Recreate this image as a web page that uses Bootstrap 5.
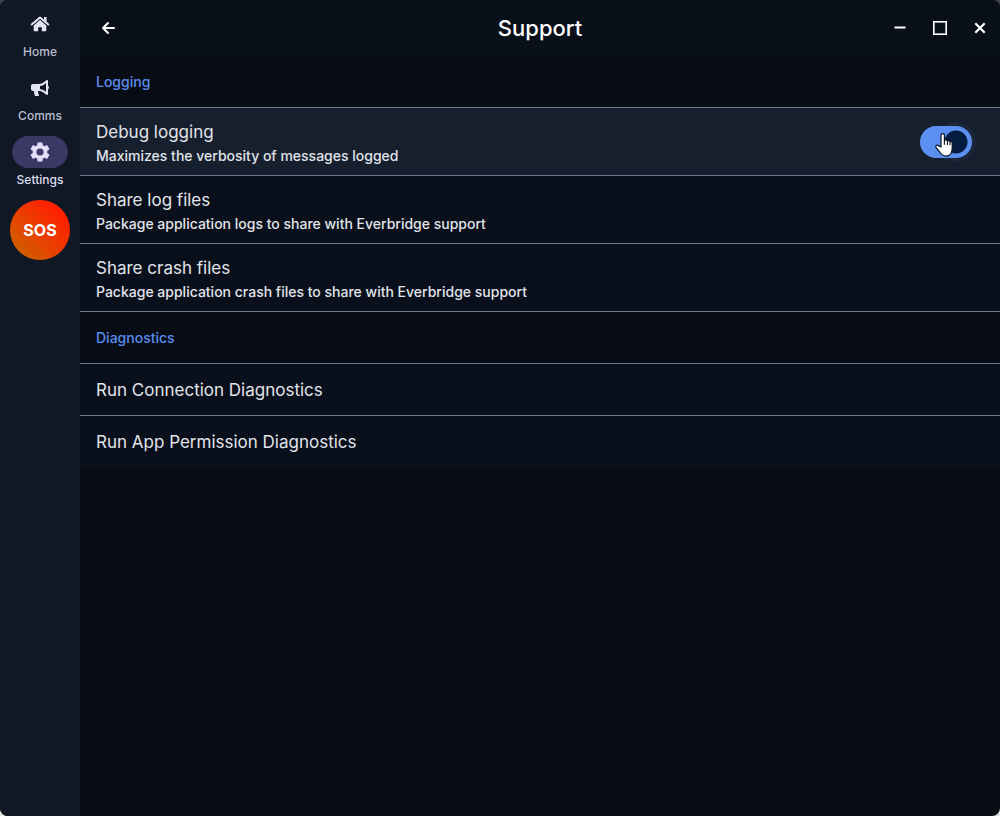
<!DOCTYPE html>
<html lang="en" data-bs-theme="dark">
<head>
<meta charset="utf-8">
<meta name="viewport" content="width=device-width, initial-scale=1">
<title>Support</title>
<link href="https://cdn.jsdelivr.net/npm/bootstrap@5.3.0/dist/css/bootstrap.min.css" rel="stylesheet">
<style>
  html { background: linear-gradient(#3c414b 50%, #e6e6e6 50%); }
  body { font-family: Inter, "Liberation Sans", sans-serif; background: transparent; color: #e1e4ea; }
  .app-window { background: #080c14; border-radius: 8px; }
  .rail { width: 80px; background: #101725; }
  .rail-link { color: #b9bfd0; font-size: 12px; line-height: 16px; font-weight: 500; height: 60px; }
  .rail-link:hover { color: #e1e4ea; }
  .rail-pill { width: 56px; height: 32px; color: #e4e6f2; }
  .rail-link.active { color: #dcdff0; }
  .rail-link.active .rail-pill { background: #3b3866; color: #e3dff9; }
  .sos { width: 60px; height: 60px; background: linear-gradient(45deg, #c96a00, #ff2000 80%); color: #fff; font-size: 16px; font-weight: 700; line-height: 24px; }
  .titlebar { height: 56px; background: #09101a; color: #fff; }
  .titlebar h1 { font-size: 22px; line-height: 28px; font-weight: 500; }
  .icon-button { width: 40px; height: 40px; color: #fff; background: none; border: 0; padding: 0; }
  .group-title { color: #5b8def; font-size: 14px; line-height: 20px; font-weight: 500; padding: 16px 16px 15px; border-bottom: 1px solid #6b7890; }
  .setting { background: #09101b; border-bottom: 1px solid #6b7890; padding: 10px 28px 9px 16px; color: #e1e4ea; text-decoration: none; }
  .setting.single { padding: 12px 16px 11px; }
  .setting.last { border-bottom: 0; padding-bottom: 12px; }
  .setting.hovered, .setting:hover { background: #161f2d; }
  .setting-name { font-size: 17px; line-height: 28px; }
  .setting-note { font-size: 14px; line-height: 20px; font-weight: 500; }
  .toggle { width: 52px; height: 32px; }
  .toggle::before { content: ""; position: absolute; width: 40px; height: 40px; right: -4px; top: -4px; border-radius: 50%; background: #1b2638; }
  .form-switch .toggle-input.form-check-input { position: relative; width: 52px; height: 32px; margin: 0; border: 0; background: radial-gradient(circle at 36px 16px, #051c41 11px, transparent 12px) #5b8ff0; box-shadow: none; border-radius: 16px; }
  .form-switch .toggle-input.form-check-input:not(:checked) { background: radial-gradient(circle at 16px 16px, #8b95a8 8px, transparent 9px) #202a3a; }
  .pointer { position: absolute; left: 15px; top: 7px; pointer-events: none; }
</style>
</head>
<body>
<div class="app-window d-flex min-vh-100 overflow-hidden">
  <nav class="rail flex-shrink-0 d-flex flex-column align-items-center gap-1 pt-2" aria-label="Main">
    <a href="#home" class="rail-link d-flex flex-column align-items-center text-decoration-none">
      <span class="rail-pill rounded-pill d-flex align-items-center justify-content-center">
        <svg width="20" height="16" viewBox="0 0 20 16" aria-hidden="true"><path d="M1.700 8.500 10 1.500l8.300 7" fill="none" stroke="currentColor" stroke-width="2" stroke-linecap="round" stroke-linejoin="round"/><path d="M14 1h2.600v5L14 3.800z" fill="currentColor"/><path d="m10 4.100 6.300 5.300V14.600a.7.7 0 0 1-.7.7H11.800v-4H8.200v4H4.400a.7.7 0 0 1-.7-.7V9.400z" fill="currentColor"/></svg>
      </span>
      <span class="mt-1">Home</span>
    </a>
    <a href="#comms" class="rail-link d-flex flex-column align-items-center text-decoration-none">
      <span class="rail-pill rounded-pill d-flex align-items-center justify-content-center">
        <svg width="18" height="16" viewBox="0 0 576 512" aria-hidden="true"><path fill="currentColor" d="M576 240c0-23.600-13-44-32-55.100V32c0-8.700-7-32-32-32-7.100 0-14.200 2.400-20 7l-85 68c-42.700 34.100-96.300 53-151 53H64c-35.300 0-64 28.700-64 64v96c0 35.300 28.700 64 64 64h33.700a243 243 0 0 0 24.500 142c5.400 10.900 16.800 18 29 18h74.300c26 0 41.700-29.800 25.900-50.500A127.400 127.400 0 0 1 225 384c0-11.100 1.600-21.800 4.400-32H256c54.700 0 108.300 18.900 151 53l85 68a32 32 0 0 0 20 7c24.900 0 32-22.800 32-32V295.100c19-11.100 32-31.500 32-55.100zm-96 141.400-33-26.400a306 306 0 0 0-159-65.500v-99a306 306 0 0 0 159-65.500l33-26.400z"/></svg>
      </span>
      <span class="mt-1">Comms</span>
    </a>
    <a href="#settings" class="rail-link active d-flex flex-column align-items-center text-decoration-none" aria-current="page">
      <span class="rail-pill rounded-pill d-flex align-items-center justify-content-center">
        <svg width="24" height="24" viewBox="0 0 24 24" aria-hidden="true"><path fill="currentColor" d="M19.140 12.940c.04-.3.060-.61.060-.94s-.02-.64-.07-.94l2.030-1.580c.18-.14.230-.41.120-.61l-1.920-3.320c-.12-.22-.37-.29-.59-.22l-2.390.96c-.5-.38-1.030-.7-1.620-.94l-.36-2.540a.48.48 0 0 0-.48-.41h-3.840c-.24 0-.43.170-.47.410l-.36 2.540c-.59.240-1.130.570-1.620.940l-2.390-.96c-.22-.08-.47 0-.59.220L2.740 8.870c-.12.210-.08.470.120.610l2.030 1.580c-.05.3-.09.630-.09.940s.02.640.070.940l-2.030 1.580c-.18.140-.23.410-.12.610l1.920 3.320c.12.220.37.290.59.220l2.390-.96c.5.380 1.030.7 1.620.940l.36 2.540c.05.240.24.410.48.410h3.840c.24 0 .44-.17.470-.41l.36-2.540c.59-.24 1.130-.56 1.620-.94l2.390.960c.22.080.47 0 .59-.22l1.920-3.320c.12-.22.070-.47-.12-.61zM12 15.600a3.600 3.600 0 1 1 0-7.200 3.600 3.600 0 0 1 0 7.200z"/></svg>
      </span>
      <span class="mt-1">Settings</span>
    </a>
    <button type="button" class="sos btn rounded-circle border-0 p-0">SOS</button>
  </nav>

  <main class="flex-grow-1">
    <header class="titlebar row g-0 align-items-center">
      <div class="col d-flex">
        <button type="button" class="icon-button d-flex align-items-center justify-content-center ms-2" aria-label="Back">
          <svg width="16" height="16" viewBox="0 0 16 16" fill="none" stroke="currentColor" stroke-width="2" stroke-linecap="round" stroke-linejoin="round" aria-hidden="true"><path d="M14 8H3M8 3 3 8l5 5"/></svg>
        </button>
      </div>
      <h1 class="col-auto m-0">Support</h1>
      <div class="col d-flex justify-content-end">
        <button type="button" class="icon-button d-flex align-items-center justify-content-center" aria-label="Minimize">
          <svg width="16" height="16" viewBox="0 0 16 16" aria-hidden="true"><path d="M2.500 7.500h11" stroke="currentColor" stroke-width="2"/></svg>
        </button>
        <button type="button" class="icon-button d-flex align-items-center justify-content-center" aria-label="Maximize">
          <svg width="16" height="16" viewBox="0 0 16 16" aria-hidden="true"><rect x="1.800" y="1.800" width="12.400" height="12.400" fill="none" stroke="currentColor" stroke-width="1.600"/></svg>
        </button>
        <button type="button" class="icon-button d-flex align-items-center justify-content-center" aria-label="Close">
          <svg width="16" height="16" viewBox="0 0 16 16" aria-hidden="true"><path d="m3.300 3.300 9.400 9.400M12.700 3.300 3.300 12.700" stroke="currentColor" stroke-width="2.200"/></svg>
        </button>
      </div>
    </header>

    <section>
      <h2 class="group-title m-0">Logging</h2>
      <div class="setting hovered d-flex align-items-center justify-content-between">
        <label for="debug">
          <span class="setting-name d-block">Debug logging</span>
          <span class="setting-note d-block" id="debug-note">Maximizes the verbosity of messages logged</span>
        </label>
        <div class="toggle form-switch position-relative p-0">
          <input class="toggle-input form-check-input float-none d-block" type="checkbox" role="switch" id="debug" aria-describedby="debug-note" checked>
          <svg class="pointer" width="18" height="24" viewBox="0 0 18 24" aria-hidden="true"><path d="M6 14V2.300a1.700 1.700 0 0 1 3.400 0V7.500c.5-1 2.700-.8 3 .6.700-.8 2.400-.5 2.600.7.900-.5 2.200 0 2.200 1.300v5c0 4.500-2.200 8-6.200 8-3 0-4.500-1.300-6-3.800L1 14.300c-.8-1.600 1-2.800 2.400-1.700z" fill="#fff" stroke="#0b1220" stroke-width="1.200" stroke-linejoin="round"/><path d="M9.400 7.500v4.300M12.400 8.300V12M15 9.300v3" stroke="#0b1220" stroke-width="1.100"/></svg>
        </div>
      </div>
      <a href="#share-logs" class="setting d-block">
        <span class="setting-name d-block">Share log files</span>
        <span class="setting-note d-block">Package application logs to share with Everbridge support</span>
      </a>
      <a href="#share-crashes" class="setting d-block">
        <span class="setting-name d-block">Share crash files</span>
        <span class="setting-note d-block">Package application crash files to share with Everbridge support</span>
      </a>
    </section>

    <section>
      <h2 class="group-title m-0">Diagnostics</h2>
      <a href="#connection" class="setting single d-block"><span class="setting-name d-block">Run Connection Diagnostics</span></a>
      <a href="#permissions" class="setting single last d-block"><span class="setting-name d-block">Run App Permission Diagnostics</span></a>
    </section>
  </main>
</div>
<script src="https://cdn.jsdelivr.net/npm/bootstrap@5.3.0/dist/js/bootstrap.bundle.min.js"></script>
</body>
</html>
